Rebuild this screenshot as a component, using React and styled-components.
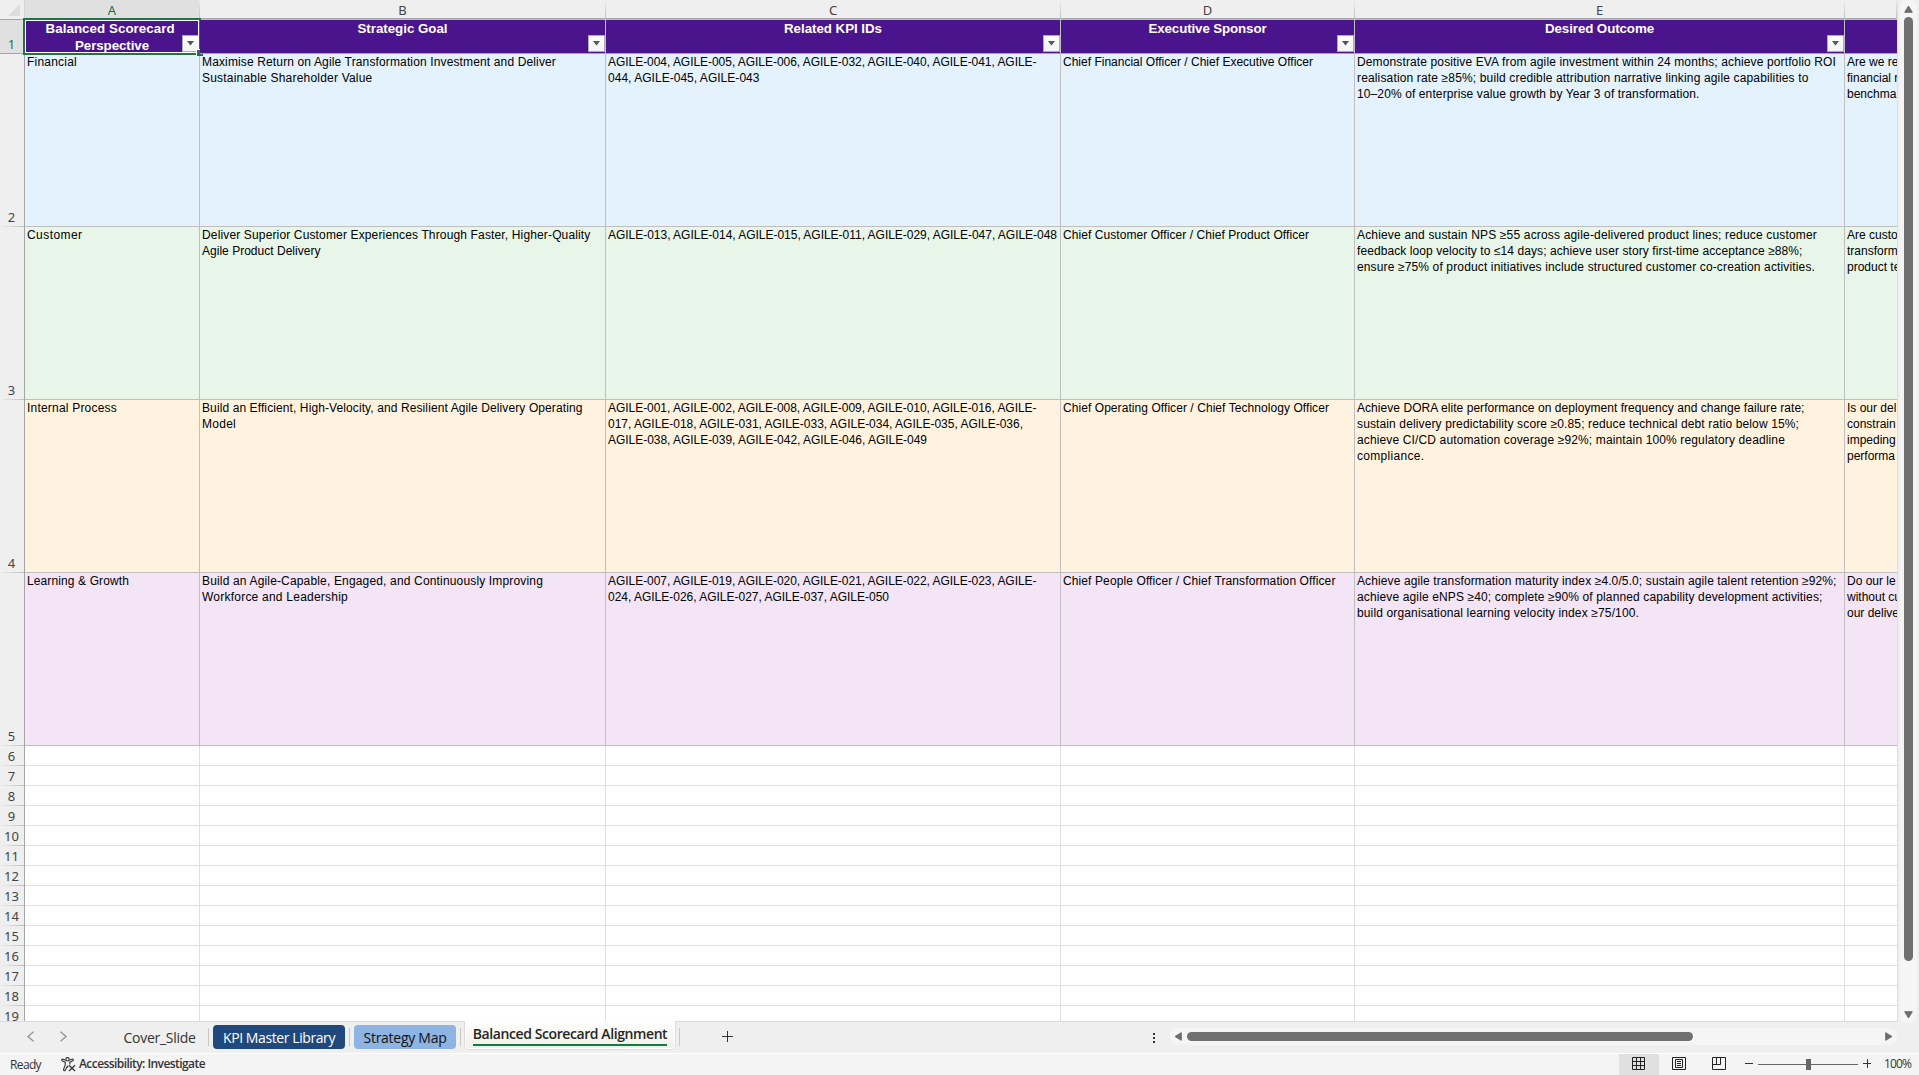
import React, { useLayoutEffect, useRef, useState } from 'react';
import styled, { createGlobalStyle } from 'styled-components';

const columns = [
    { id: 'A', width: 175, title: [['Balanced Scorecard ', 133], ['Perspective', 74]], filter: true },
    { id: 'B', width: 406, title: [['Strategic Goal', 90]], filter: true },
    { id: 'C', width: 455, title: [['Related KPI IDs', 98]], filter: true },
    { id: 'D', width: 294, title: [['Executive Sponsor', 118]], filter: true },
    { id: 'E', width: 490, title: [['Desired Outcome', 109]], filter: true },
    { id: 'F', width: 52, title: [] },
];

// every line is [text, width in px]
const perspectives = [
    {
        color: '#e3f2fd',
        cells: [
            [['Financial', 50]],
            [['Maximise Return on Agile Transformation Investment and Deliver', 354], ['Sustainable Shareholder Value', 170.5]],
            [['AGILE-004, AGILE-005, AGILE-006, AGILE-032, AGILE-040, AGILE-041, AGILE-', 428.5], ['044, AGILE-045, AGILE-043', 151.5]],
            [['Chief Financial Officer / Chief Executive Officer', 250]],
            [
                ['Demonstrate positive EVA from agile investment within 24 months; achieve portfolio ROI', 479],
                ['realisation rate ≥85%; build credible attribution narrative linking agile capabilities to', 451.5],
                ['10–20% of enterprise value growth by Year 3 of transformation.', 342.5],
            ],
            [['Are we re'], ['financial r'], ['benchma']],
        ],
    },
    {
        color: '#e8f5e9',
        cells: [
            [['Customer', 55.5]],
            [['Deliver Superior Customer Experiences Through Faster, Higher-Quality', 388.5], ['Agile Product Delivery', 118.5]],
            [['AGILE-013, AGILE-014, AGILE-015, AGILE-011, AGILE-029, AGILE-047, AGILE-048', 449]],
            [['Chief Customer Officer / Chief Product Officer', 246]],
            [
                ['Achieve and sustain NPS ≥55 across agile-delivered product lines; reduce customer', 460],
                ['feedback loop velocity to ≤14 days; achieve user story first-time acceptance ≥88%;', 445.5],
                ['ensure ≥75% of product initiatives include structured customer co-creation activities.', 458],
            ],
            [['Are custo'], ['transform'], ['product te']],
        ],
    },
    {
        color: '#fff3e0',
        cells: [
            [['Internal Process', 90]],
            [['Build an Efficient, High-Velocity, and Resilient Agile Delivery Operating', 380.5], ['Model', 34]],
            [
                ['AGILE-001, AGILE-002, AGILE-008, AGILE-009, AGILE-010, AGILE-016, AGILE-', 428.5],
                ['017, AGILE-018, AGILE-031, AGILE-033, AGILE-034, AGILE-035, AGILE-036,', 415],
                ['AGILE-038, AGILE-039, AGILE-042, AGILE-046, AGILE-049', 319],
            ],
            [['Chief Operating Officer / Chief Technology Officer', 266]],
            [
                ['Achieve DORA elite performance on deployment frequency and change failure rate;', 447.5],
                ['sustain delivery predictability score ≥0.85; reduce technical debt ratio below 15%;', 442],
                ['achieve CI/CD automation coverage ≥92%; maintain 100% regulatory deadline', 428],
                ['compliance.', 67.5],
            ],
            [['Is our del'], ['constrain'], ['impeding'], ['performa']],
        ],
    },
    {
        color: '#f3e5f5',
        cells: [
            [['Learning & Growth', 102]],
            [['Build an Agile-Capable, Engaged, and Continuously Improving', 341], ['Workforce and Leadership', 146]],
            [['AGILE-007, AGILE-019, AGILE-020, AGILE-021, AGILE-022, AGILE-023, AGILE-', 428.5], ['024, AGILE-026, AGILE-027, AGILE-037, AGILE-050', 281]],
            [['Chief People Officer / Chief Transformation Officer', 272.5]],
            [
                ['Achieve agile transformation maturity index ≥4.0/5.0; sustain agile talent retention ≥92%;', 479.5],
                ['achieve agile eNPS ≥40; complete ≥90% of planned capability development activities;', 465.5],
                ['build organisational learning velocity index ≥75/100.', 282],
            ],
            [['Do our le'], ['without cu'], ['our delive']],
        ],
    },
];

const emptyRows = [6, 7, 8, 9, 10, 11, 12, 13, 14, 15, 16, 17, 18, 19];

// tracks a single line of text so that it fills the given width
function Fit({ width, children }) {
    const ref = useRef(null);
    const [spacing, setSpacing] = useState(0);

    useLayoutEffect(() => {
        if (!width) return;
        const natural = ref.current.getBoundingClientRect().width;
        setSpacing((width - natural) / children.length);
    }, []);

    return <FitStyle ref={ref} style={{ letterSpacing: spacing }}>{children}</FitStyle>;
}

function Lines({ lines }) {
    return lines.map(([text, width]) => (
        <LineStyle key={text}><Fit width={width}>{text}</Fit></LineStyle>
    ));
}

export default function App() {
    return (
        <PageStyle>
            <GlobalStyle />
            <WorkAreaStyle>
                <SheetStyle>
                    <RowStyle $height={20}>
                        <CornerStyle><svg width="12" height="12"><path d="M12 0V12H0Z" fill="#dcdcdc" /></svg></CornerStyle>
                        {columns.map((c) => (
                            <ColumnHeadStyle key={c.id} $width={c.width} $active={c.id === 'A'}>{c.id !== 'F' && c.id}</ColumnHeadStyle>
                        ))}
                    </RowStyle>
                    <RowStyle $height={34}>
                        <RowHeadStyle $active>1</RowHeadStyle>
                        {columns.map((c) => (
                            <TitleCellStyle key={c.id} $width={c.width}>
                                <Lines lines={c.title} />
                                {c.filter && <FilterStyle><svg width="7" height="5"><path d="M0 0H7L3.5 4.5Z" fill="#555" /></svg></FilterStyle>}
                                {c.id === 'A' && <SelectionStyle />}
                            </TitleCellStyle>
                        ))}
                    </RowStyle>
                    {perspectives.map((p, i) => (
                        <RowStyle key={p.color} $height={173}>
                            <RowHeadStyle>{i + 2}</RowHeadStyle>
                            {p.cells.map((lines, n) => (
                                <CellStyle key={n} $width={columns[n].width} $color={p.color}><Lines lines={lines} /></CellStyle>
                            ))}
                        </RowStyle>
                    ))}
                    {emptyRows.map((n) => (
                        <RowStyle key={n} $height={20}>
                            <RowHeadStyle>{n}</RowHeadStyle>
                            {columns.map((c) => <EmptyCellStyle key={c.id} $width={c.width} />)}
                        </RowStyle>
                    ))}
                </SheetStyle>
                <VerticalScrollStyle>
                    <svg width="9" height="8"><path d="M4.5 1L8.3 7.3H.7Z" fill="#6e6e6e" stroke="#6e6e6e" strokeLinejoin="round" /></svg>
                    <VerticalThumbStyle />
                    <svg width="9" height="8"><path d="M4.5 7L8.3 .7H.7Z" fill="#6e6e6e" stroke="#6e6e6e" strokeLinejoin="round" /></svg>
                </VerticalScrollStyle>
            </WorkAreaStyle>
            <TabBarStyle>
                <NavStyle>
                    <svg width="8" height="11"><path d="M6.5 .8L1 5.5L6.5 10.2" fill="none" stroke="#919191" strokeWidth="1.3" /></svg>
                    <svg width="8" height="11"><path d="M1.5 .8L7 5.5L1.5 10.2" fill="none" stroke="#919191" strokeWidth="1.3" /></svg>
                </NavStyle>
                <TabStyle $width={91} $text="#333"><Fit width={72}>Cover_Slide</Fit></TabStyle>
                <DividerStyle />
                <TabStyle $width={132} $color="#1f497d" $text="#fff"><Fit width={112}>KPI Master Library</Fit></TabStyle>
                <DividerStyle />
                <TabStyle $width={102} $color="#8db4e2" $text="#111"><Fit width={83}>Strategy Map</Fit></TabStyle>
                <DividerStyle />
                <ActiveTabStyle><ActiveLabelStyle><Fit width={194.5}>Balanced Scorecard Alignment</Fit></ActiveLabelStyle></ActiveTabStyle>
                <DividerStyle />
                <AddStyle><svg width="11" height="11"><path d="M5.5 0V11M0 5.5H11" stroke="#333" /></svg></AddStyle>
                <DotsStyle><svg width="2" height="10"><path d="M0 0H2V2H0ZM0 4H2V6H0ZM0 8H2V10H0Z" fill="#333" /></svg></DotsStyle>
                <HorizontalScrollStyle>
                    <svg width="8" height="9"><path d="M1 4.5L7.3 .7V8.3Z" fill="#6e6e6e" stroke="#6e6e6e" strokeLinejoin="round" /></svg>
                    <HorizontalThumbStyle />
                    <svg width="8" height="9"><path d="M7 4.5L.7 .7V8.3Z" fill="#6e6e6e" stroke="#6e6e6e" strokeLinejoin="round" /></svg>
                </HorizontalScrollStyle>
            </TabBarStyle>
            <StatusBarStyle>
                <ReadyStyle><Fit width={31}>Ready</Fit></ReadyStyle>
                <AccessStyle>
                    <svg width="15" height="15" fill="none" stroke="#333" strokeWidth="1.1">
                        <circle cx="6.5" cy="2.3" r="1.7" />
                        <path d="M4.7 3.2L1.9 2.2C.6 1.9 .2 3.4 1.4 4L4.2 5.2V8L2.6 12.3C2.3 13.8 3.9 14.2 4.4 13L6.4 9.2L7.3 10.3M8.3 3.2L11.1 2.2C12.4 1.9 12.8 3.4 11.6 4L8.8 5.2V7.6" />
                        <path d="M8 8.3L14 14M14 8.3L8 14" strokeWidth="1.3" />
                    </svg>
                    <Fit width={126}>Accessibility: Investigate</Fit>
                </AccessStyle>
                <ViewsStyle>
                    <ViewStyle $active>
                        <svg width="14" height="14" fill="none" stroke="#222"><path d="M.5 .5H12.5V12.5H.5ZM4.5 .5V12.5M8.5 .5V12.5M.5 4.5H12.5M.5 8.5H12.5" /></svg>
                    </ViewStyle>
                    <ViewStyle>
                        <svg width="14" height="14" fill="none" stroke="#222"><path d="M.5 .5H13.5V12.5H.5ZM3.5 2.5H10.5V10.5H3.5ZM5 4.5H9M5 6.5H9M5 8.5H9" /></svg>
                    </ViewStyle>
                    <ViewStyle>
                        <svg width="14" height="14" fill="none" stroke="#222"><path d="M.5 .5H13.5V12.5H.5ZM4.5 .5V7.5M.5 7.5H8.5V.5" /></svg>
                    </ViewStyle>
                </ViewsStyle>
                <ZoomStyle>
                    <svg width="8" height="9"><path d="M0 4.5H8" stroke="#333" /></svg>
                    <SliderStyle><KnobStyle /></SliderStyle>
                    <svg width="9" height="9"><path d="M0 4.5H8M4.5 0V9" stroke="#333" /></svg>
                </ZoomStyle>
                <PercentStyle><Fit width={27}>100%</Fit></PercentStyle>
            </StatusBarStyle>
        </PageStyle>
    );
}

const GlobalStyle = createGlobalStyle`
    * { box-sizing: border-box; }
    body { margin: 0; overflow: hidden; }
    svg { display: block; flex-shrink: 0; }
`;

const PageStyle = styled.div`
    display: flex;
    flex-direction: column;
    width: 1919px;
    height: 1075px;
    background: #efefef;
    font-family: "Open Sans", "Noto Sans", sans-serif;
    overflow: hidden;
`;

const WorkAreaStyle = styled.div`
    display: flex;
    height: 1022px;
`;

const SheetStyle = styled.div`
    width: 1898px;
    height: 1022px;
    overflow: hidden;
    border-right: 1px solid #dfdfdf;
    border-bottom: 1px solid #dcdcdc;
`;

const RowStyle = styled.div`
    display: flex;
    height: ${(p) => p.$height}px;
`;

const CornerStyle = styled.div`
    display: flex;
    align-items: center;
    justify-content: flex-end;
    width: 25px;
    padding: 0 4px 0 0;
    border-right: 1px solid #d4d4d4;
    border-bottom: 1px solid #a5a5a5;
`;

const ColumnHeadStyle = styled.div`
    display: flex;
    align-items: center;
    justify-content: center;
    width: ${(p) => p.$width}px;
    padding-top: 1px;
    font-family: "Noto Sans", sans-serif;
    font-size: 13px;
    line-height: 16px;
    color: ${(p) => (p.$active ? '#217346' : '#444')};
    background: ${(p) => (p.$active ? '#e0e0e0' : '#efefef')};
    border-bottom: 1px solid #a5a5a5;
    border-right: 1px solid;
    border-image: linear-gradient(#efefef, #bdbdbd) 1;
    box-shadow: inset 0 -1px 0 #a5a5a5;
`;

const RowHeadStyle = styled.div`
    display: flex;
    align-items: flex-end;
    justify-content: center;
    width: 25px;
    padding: 0 1px 1px 0;
    font-family: "Noto Sans", sans-serif;
    font-size: 13px;
    line-height: 18px;
    color: ${(p) => (p.$active ? '#217346' : '#444')};
    background: ${(p) => (p.$active ? 'linear-gradient(#a5a5a5, #a5a5a5) bottom / 100% 1px no-repeat #e0e0e0' : 'linear-gradient(90deg, #efefef, #bdbdbd) bottom / 100% 1px no-repeat #efefef')};
    border-right: 1px solid #a5a5a5;
`;

const CellStyle = styled.div`
    width: ${(p) => p.$width}px;
    padding-left: 2px;
    overflow: hidden;
    font-family: "Liberation Sans", Arial, sans-serif;
    font-size: 12px;
    color: #000;
    background: ${(p) => p.$color};
    border-right: 1px solid #bfbfbf;
    border-bottom: 1px solid #bfbfbf;
    &:last-child { border-right: 0; }
`;

const EmptyCellStyle = styled.div`
    width: ${(p) => p.$width}px;
    background: #fff;
    border-right: 1px solid #dfdfdf;
    border-bottom: 1px solid #dfdfdf;
    &:last-child { border-right: 0; }
`;

const TitleCellStyle = styled.div`
    position: relative;
    width: ${(p) => p.$width}px;
    font-family: "Liberation Sans", Arial, sans-serif;
    font-size: 13.33px;
    font-weight: bold;
    text-align: center;
    color: #fff;
    background: #4a148c;
    border-right: 1px solid #bfbfbf;
    border-bottom: 1px solid #a5a5a5;
    & > div { line-height: 17px; }
    &:last-child { border-right: 0; }
`;

const LineStyle = styled.div`
    line-height: 16px;
    white-space: pre;
`;

const FitStyle = styled.span`
    white-space: pre;
`;

const FilterStyle = styled.span`
    position: absolute;
    right: 0;
    bottom: 1px;
    display: flex;
    align-items: center;
    justify-content: center;
    width: 17px;
    height: 17px;
    background: linear-gradient(#fff, #f1f3f7);
    border: 1px solid #acacac;
`;

// frame of the selected cell with its fill handle
const SelectionStyle = styled.span`
    position: absolute;
    left: -2px;
    top: -2px;
    width: 178px;
    height: 37px;
    border: 2px solid #217346;
    box-shadow: inset 0 0 0 1px #fff;
    &::after {
        content: "";
        position: absolute;
        right: -4px;
        bottom: -3px;
        width: 6px;
        height: 6px;
        background: #217346;
        border-left: 1px solid #fff;
        border-top: 1px solid #fff;
    }
`;

const VerticalScrollStyle = styled.div`
    display: flex;
    flex-direction: column;
    align-items: center;
    width: 17px;
    height: 1023px;
    margin-left: 2px;
    padding: 5px 0 4px;
    background: #f5f5f5;
    border-radius: 8px;
    svg:last-child { margin-top: auto; }
`;

const VerticalThumbStyle = styled.div`
    width: 9px;
    height: 944px;
    margin-top: 4px;
    background: #707070;
    border-radius: 5px;
`;

const TabBarStyle = styled.div`
    display: flex;
    height: 32px;
    border-bottom: 1px solid #fff;
`;

const NavStyle = styled.div`
    display: flex;
    gap: 24px;
    width: 113px;
    padding: 9px 0 0 27px;
`;

const TabStyle = styled.div`
    display: flex;
    align-items: center;
    justify-content: center;
    width: ${(p) => p.$width}px;
    height: 24px;
    margin-top: 3px;
    padding-left: ${(p) => (p.$color ? 0 : 2)}px;
    font-size: 14px;
    color: ${(p) => p.$text};
    background: ${(p) => p.$color || 'transparent'};
    border-radius: 4px;
`;

const DividerStyle = styled.div`
    width: 1px;
    height: 18px;
    margin: 6px 4px 0;
    background: #c8c8c8;
`;

const ActiveTabStyle = styled.div`
    display: flex;
    justify-content: center;
    width: 210px;
    height: 28px;
    margin-top: -1px;
    background: linear-gradient(#fff, #f1f0e8);
    border: 1px solid #fff;
    border-top: 0;
    border-radius: 0 0 4px 4px;
    box-shadow: 0 0 0 1px #dcdcdc;
    clip-path: inset(0 -2px -2px -2px);
`;

const ActiveLabelStyle = styled.div`
    height: 25px;
    font-size: 14px;
    font-weight: 600;
    line-height: 26px;
    color: #262626;
    border-bottom: 2px solid #107c41;
`;

const AddStyle = styled.div`
    padding: 9px 0 0 38px;
`;

const DotsStyle = styled.div`
    margin-left: auto;
    padding-top: 11px;
`;

const HorizontalScrollStyle = styled.div`
    display: flex;
    align-items: center;
    width: 727px;
    height: 17px;
    margin: 6px 22px 0 15px;
    padding: 0 4px;
    background: #f5f5f5;
    border-radius: 8px;
    svg:last-child { margin-left: auto; }
`;

const HorizontalThumbStyle = styled.div`
    width: 506px;
    height: 9px;
    margin-left: 5px;
    background: #707070;
    border-radius: 5px;
`;

const StatusBarStyle = styled.div`
    display: flex;
    height: 21px;
    font-size: 12px;
    line-height: 21px;
    color: #333;
    background: #f4f4f4;
`;

const ReadyStyle = styled.div`
    width: 61px;
    padding-left: 10px;
`;

const AccessStyle = styled.div`
    display: flex;
    gap: 3px;
    font-weight: 600;
    line-height: 20px;
    svg { margin-top: 3px; }
`;

const ViewsStyle = styled.div`
    display: flex;
    margin-left: auto;
`;

const ViewStyle = styled.div`
    display: flex;
    justify-content: center;
    width: 40px;
    padding-top: 3px;
    background: ${(p) => (p.$active ? '#e0e0e0' : 'transparent')};
`;

const ZoomStyle = styled.div`
    display: flex;
    align-items: flex-start;
    gap: 5px;
    margin-left: 6px;
    padding-top: 5px;
`;

const SliderStyle = styled.div`
    display: flex;
    align-items: center;
    justify-content: center;
    width: 100px;
    height: 11px;
    background: linear-gradient(#666, #666) center / 100% 1px no-repeat;
`;

const KnobStyle = styled.div`
    width: 5px;
    height: 11px;
    background: #666;
`;

const PercentStyle = styled.div`
    width: 47px;
    padding-left: 12px;
    line-height: 20px;
`;
